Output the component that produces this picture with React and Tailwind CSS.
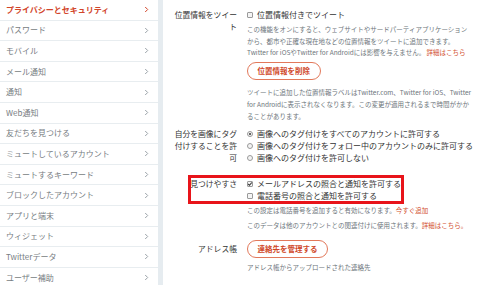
import React from "react";

const items = [
  "プライバシーとセキュリティ",
  "パスワード",
  "モバイル",
  "メール通知",
  "通知",
  "Web通知",
  "友だちを見つける",
  "ミュートしているアカウント",
  "ミュートするキーワード",
  "ブロックしたアカウント",
  "アプリと端末",
  "ウィジェット",
  "Twitterデータ",
  "ユーザー補助",
];

function Chevron({ color }) {
  return (
    <svg width="5" height="7" viewBox="0 0 5 7">
      <path d="M1.2 1 L3.7 3.5 L1.2 6" fill="none" stroke={color} strokeWidth="1" />
    </svg>
  );
}

function Checkbox({ checked }) {
  return (
    <span className="relative inline-flex w-[6px] h-[6px] border border-[#9a9a9a] bg-[#f4f4f4] rounded-[1px] shrink-0 mr-[4px]">
      {checked && (
        <svg className="absolute -left-[1px] -top-[1px]" width="6" height="6" viewBox="0 0 6 6">
          <path d="M1.2 3 L2.5 4.3 L4.8 1.5" fill="none" stroke="#333" strokeWidth="1.1" />
        </svg>
      )}
    </span>
  );
}

function Radio({ checked }) {
  return (
    <span className="inline-flex items-center justify-center w-[6px] h-[6px] rounded-full border border-[#9a9a9a] bg-[#f4f4f4] shrink-0 mr-[4px]">
      {checked && <span className="w-[2.5px] h-[2.5px] rounded-full bg-[#333]" />}
    </span>
  );
}

function Btn({ children }) {
  return (
    <span className="inline-flex items-center h-[18px] px-[9.5px] rounded-full border border-[#e2785a] text-[#cf4728] font-bold text-[7.5px] leading-none">
      {children}
    </span>
  );
}

const Link = ({ children }) => <span className="text-[#d2502f]">{children}</span>;

const labelCls = "w-[84px] shrink-0 pl-[10px] pr-[10px] text-right text-[7.8px] text-[#333]";

export default function App() {
  return (
    <div
      className="w-[490px] h-[285px] overflow-hidden bg-[#e6ecf0] flex"
      style={{ fontFamily: '"Noto Sans CJK JP", "Liberation Sans", sans-serif' }}
    >
      <div className="w-[158px] bg-white shrink-0">
        {items.map((t, i) => (
          <div
            key={t}
            className={
              "flex items-center justify-between h-[20.6px] border-b border-[#e8edf0] pl-[6px] pr-[9px] text-[8px] " +
              (i === 0 ? "text-[#d2452a] font-bold" : "text-[#777d82]")
            }
          >
            <span>{t}</span>
            <Chevron color={i === 0 ? "#d2452a" : "#9aa2a8"} />
          </div>
        ))}
      </div>
      <div className="ml-[5px] flex-1 bg-white pt-[9px] text-[8px] text-[#333]">
        {/* Row 1 */}
        <div className="flex">
          <div className={labelCls + " leading-[12px]"}>位置情報をツイート</div>
          <div className="flex-1">
            <div className="flex items-center leading-[12px]">
              <Checkbox />
              <span>位置情報付きでツイート</span>
            </div>
            <div className="mt-[3px] text-[6.5px] leading-[11.7px] text-[#6d757b] whitespace-nowrap">
              この機能をオンにすると、ウェブサイトやサードパーティアプリケーション
              <br />
              から、都市や正確な現在地などの位置情報をツイートに追加できます。
              <br />
              Twitter for iOSやTwitter for Androidには影響を与えません。 <Link>詳細はこちら</Link>
            </div>
            <div className="mt-[3px]">
              <Btn>位置情報を削除</Btn>
            </div>
            <div className="mt-[7px] text-[6.5px] leading-[11.7px] text-[#6d757b] whitespace-nowrap">
              ツイートに追加した位置情報ラベルはTwitter.com、Twitter for iOS、Twitter
              <br />
              for Androidに表示されなくなります。この変更が適用されるまで時間がかか
              <br />
              ることがあります。
            </div>
          </div>
        </div>
        {/* Row 2 */}
        <div className="flex mt-[6px]">
          <div className={labelCls + " leading-[12px]"}>自分を画像にタグ付けすることを許可</div>
          <div className="flex-1 leading-[12px]">
            <div className="flex items-center">
              <Radio checked />
              <span>画像へのタグ付けをすべてのアカウントに許可する</span>
            </div>
            <div className="flex items-center">
              <Radio />
              <span>画像へのタグ付けをフォロー中のアカウントのみに許可する</span>
            </div>
            <div className="flex items-center">
              <Radio />
              <span>画像へのタグ付けを許可しない</span>
            </div>
          </div>
        </div>
        {/* Row 3 */}
        <div className="relative flex mt-[14px]">
          <div className="absolute left-[25px] -top-[3px] w-[216px] h-[29px] border-[3px] border-[#e8141a] pointer-events-none" />
          <div className={labelCls + " leading-[12px]"}>見つけやすさ</div>
          <div className="flex-1 leading-[12px]">
            <div className="flex items-center">
              <Checkbox checked />
              <span>メールアドレスの照合と通知を許可する</span>
            </div>
            <div className="flex items-center">
              <Checkbox />
              <span>電話番号の照合と通知を許可する</span>
            </div>
            <div className="mt-[3px] text-[6.5px] leading-[11px] text-[#6d757b] whitespace-nowrap">
              この設定は電話番号を追加すると有効になります。<Link>今すぐ追加</Link>
            </div>
            <div className="mt-[4px] text-[6.5px] leading-[11px] text-[#6d757b] whitespace-nowrap">
              このデータは他のアカウントとの関連付けに使用されます。<Link>詳細はこちら。</Link>
            </div>
          </div>
        </div>
        {/* Row 4 */}
        <div className="flex mt-[9px]">
          <div className={labelCls + " leading-[18px]"}>アドレス帳</div>
          <div className="flex-1">
            <Btn>連絡先を管理する</Btn>
            <div className="mt-[4px] text-[6.5px] leading-[11px] text-[#6d757b] whitespace-nowrap">
              アドレス帳からアップロードされた連絡先
            </div>
          </div>
        </div>
      </div>
    </div>
  );
}
